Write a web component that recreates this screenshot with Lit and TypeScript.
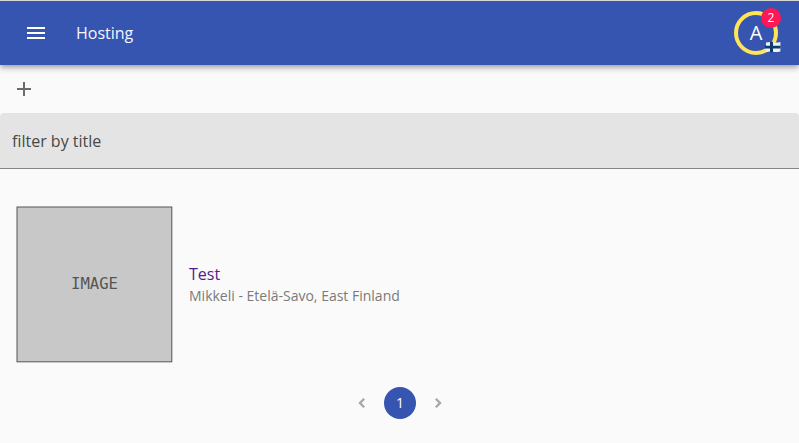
import { LitElement, html, css } from "lit";
import { customElement } from "lit/decorators.js";

@customElement("app-root")
class AppRoot extends LitElement {
  static styles = css`
    :host { display: block; height: 443px; background: #fafafa; font-family: "Open Sans", "Noto Sans", sans-serif; color: #212121; overflow: hidden; }
    * { box-sizing: border-box; }
    svg { display: block; }
    header { height: 65px; border-top: 1px solid #d5d6da; background: #3655b1; color: #fff; display: flex; align-items: center; padding: 0 21px 0 24px; position: relative; box-shadow: 0 2px 4px -1px rgba(0,0,0,.2), 0 4px 5px rgba(0,0,0,.14), 0 1px 10px rgba(0,0,0,.12); }
    .title { flex: 1; margin-left: 28px; font-size: 16px; line-height: 24px; color: #f4f6fb; }
    .avatar { position: relative; width: 44px; height: 44px; border: 4px solid #ffe456; border-radius: 50%; display: flex; align-items: center; justify-content: center; font-size: 20px; line-height: 28px; }
    .badge { position: absolute; top: -7px; right: -7px; width: 20px; height: 20px; border-radius: 50%; background: #ff1654; font-size: 12px; line-height: 20px; text-align: center; }
    .flag { position: absolute; right: -7px; bottom: -2px; }
    .tools { height: 48px; padding: 12px; fill: #6c6c6c; }
    .filter { height: 56px; padding: 0 12px; display: flex; align-items: center; background: #e4e4e4; border-radius: 4px 4px 0 0; border-bottom: 1px solid #868686; font-size: 16px; color: #484848; }
    .item { display: flex; align-items: center; gap: 17px; padding: 37px 16px 0; }
    .image { display: block; width: 156px; height: 156px; overflow: visible; }
    .image rect { fill: #c8c8c8; stroke: #555; stroke-width: 1; }
    .image text { font: 16px "DejaVu Sans Mono", monospace; fill: #555; text-anchor: middle; }
    .name { color: #551a8b; font-size: 16px; line-height: 24px; }
    .place { color: #7a7a7a; font-size: 14px; line-height: 20px; }
    .pages { display: flex; justify-content: center; align-items: center; gap: 10px; margin-top: 25px; fill: #a6a6a6; }
    .page { width: 32px; height: 32px; padding-left: 1px; border-radius: 50%; background: #3655b1; color: #fff; font-size: 14px; line-height: 32px; text-align: center; }
  `;
  render() {
    return html`
      <header>
        <svg width="24" height="24" viewBox="0 0 24 24" fill="#fff"><path d="M3 18h18v-2H3v2zm0-5h18v-2H3v2zm0-7v2h18V6H3z"/></svg>
        <div class="title">Hosting</div>
        <div class="avatar">A
          <svg class="flag" width="16" height="12" viewBox="0 0 16 12"><path d="M1 1.5Q5 .5 8 1.2T15.4 1V10.5Q11 11.5 8 10.8T1 11z" fill="#eef1ee"/><path d="M0 4.8h15.5v2.8H0zM5 .8h3V11.2H5z" fill="#0c3c70"/></svg>
          <span class="badge">2</span>
        </div>
      </header>
      <div class="tools"><svg width="24" height="24" viewBox="0 0 24 24"><path d="M19 13h-6v6h-2v-6H5v-2h6V5h2v6h6v2z"/></svg></div>
      <div class="filter">filter by title</div>
      <div class="item">
        <svg class="image" viewBox="0 0 156 156"><rect x="1" y="1" width="154.8" height="154.8"/><text x="78.5" y="83" textLength="47" lengthAdjust="spacingAndGlyphs">IMAGE</text></svg>
        <div><div class="name">Test</div><div class="place">Mikkeli - Etelä-Savo, East Finland</div></div>
      </div>
      <div class="pages">
        <svg width="24" height="24" viewBox="0 0 24 24"><path d="M15 8.5L13.4 6.9 8.3 12l5.1 5.1 1.6-1.6L11.5 12z"/></svg>
        <div class="page">1</div>
        <svg width="24" height="24" viewBox="0 0 24 24"><path d="M9 8.5l1.6-1.6 5.1 5.1-5.1 5.1L9 15.5l3.5-3.5z"/></svg>
      </div>`;
  }
}
